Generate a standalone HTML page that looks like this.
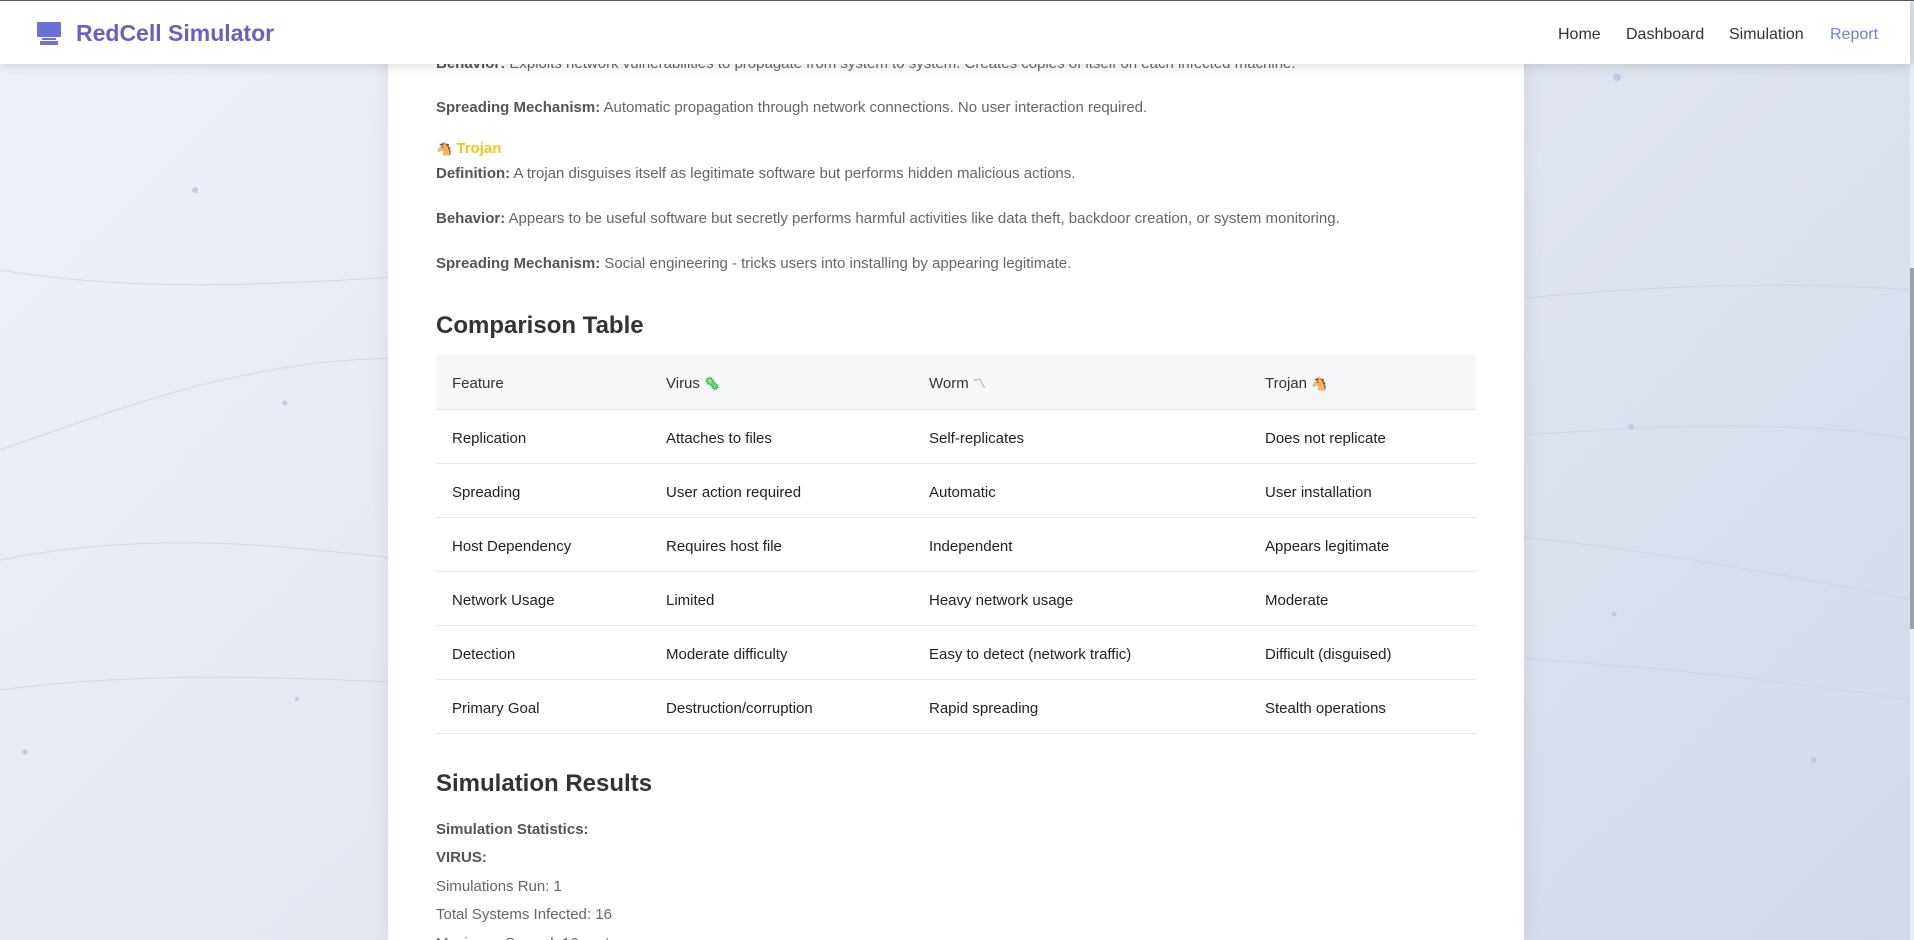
<!DOCTYPE html>
<html><head><meta charset="utf-8"><style>
*{margin:0;padding:0;box-sizing:border-box}
html,body{width:1914px;height:940px;overflow:hidden}
body{font-family:"Liberation Sans","Noto Sans CJK SC",sans-serif;background:linear-gradient(135deg,#eef1f8 0%,#e3e8f1 45%,#d2d9e8 100%);position:relative;color:#555}
.topline{position:absolute;left:0;top:0;width:1914px;height:1px;background:#555;z-index:20}
nav{position:absolute;left:0;top:1px;width:1910px;height:63px;background:#fff;box-shadow:0 2px 12px rgba(0,0,0,.12);z-index:10}
.logo{position:absolute;left:37px;top:21px}
.brand{position:absolute;left:76px;top:19px;font-size:23px;font-weight:bold;color:#6a5fc9}
.links{position:absolute;top:25px;font-size:16px;color:#333}
.links span{position:absolute;white-space:nowrap}
.card{position:absolute;left:388px;top:0;width:1136px;height:940px;background:#fff;box-shadow:0 0 20px rgba(0,0,0,.08)}
.t{position:absolute;left:436px;font-size:15px;white-space:nowrap;color:#666}
.t b{color:#555}
h2{position:absolute;left:436px;font-size:24px;color:#333;font-weight:bold}
table{position:absolute;left:436px;top:355px;width:1040px;border-collapse:collapse;font-size:15px;color:#222;table-layout:fixed}
td,th{text-align:left;font-weight:normal;height:54px;padding:4px 0 0 16px;border-bottom:1px solid #e6e8ec;vertical-align:middle}
th{background:#f6f7f9;color:#333}
th span{font-size:13px;line-height:1}
.sb{position:absolute;left:1910px;top:64px;width:4px;height:876px;background:#e9ecf2}
.sb i{position:absolute;left:0;top:204px;width:4px;height:361px;background:#9aa2ad}
</style></head><body>
<svg style="position:absolute;left:0;top:0" width="1914" height="940">
<g fill="none" stroke="#c9d1e2" stroke-width="1" opacity=".7">
<path d="M0 270 C300 320 600 220 900 300 S1500 260 1914 290"/>
<path d="M0 560 C300 500 500 620 900 560 S1500 520 1914 600"/>
<path d="M0 690 C300 650 600 720 900 680 S1500 640 1914 700"/>
<path d="M0 450 C200 380 400 300 700 420 S1600 380 1914 440"/>
</g>
<g fill="#c3cbe6"><circle cx="195" cy="190" r="3"/><circle cx="285" cy="403" r="2.5"/><circle cx="297" cy="699" r="2"/><circle cx="25" cy="752" r="2.5"/><circle cx="1617" cy="77" r="4"/><circle cx="1631" cy="427" r="3"/><circle cx="1614" cy="614" r="2.5"/><circle cx="1814" cy="760" r="3"/></g>
</svg>
<div class="card"></div>
<div class="t" style="top:55px"><b>Behavior:</b> Exploits network vulnerabilities to propagate from system to system. Creates copies of itself on each infected machine.</div>
<div class="t" style="top:99px"><b>Spreading Mechanism:</b> Automatic propagation through network connections. No user interaction required.</div>
<div class="t" style="top:140px"><span style="font-size:13px">🐴</span> <b style="color:#f5c518">Trojan</b></div>
<div class="t" style="top:165px"><b>Definition:</b> A trojan disguises itself as legitimate software but performs hidden malicious actions.</div>
<div class="t" style="top:210px"><b>Behavior:</b> Appears to be useful software but secretly performs harmful activities like data theft, backdoor creation, or system monitoring.</div>
<div class="t" style="top:255px"><b>Spreading Mechanism:</b> Social engineering - tricks users into installing by appearing legitimate.</div>
<h2 style="top:312px">Comparison Table</h2>
<table>
<colgroup><col style="width:214px"><col style="width:263px"><col style="width:336px"><col></colgroup>
<tr><th>Feature</th><th>Virus <span style="color:#3a9">🦠</span></th><th>Worm <span style="color:#c45">〽</span></th><th>Trojan <span>🐴</span></th></tr>
<tr><td>Replication</td><td>Attaches to files</td><td>Self-replicates</td><td>Does not replicate</td></tr>
<tr><td>Spreading</td><td>User action required</td><td>Automatic</td><td>User installation</td></tr>
<tr><td>Host Dependency</td><td>Requires host file</td><td>Independent</td><td>Appears legitimate</td></tr>
<tr><td>Network Usage</td><td>Limited</td><td>Heavy network usage</td><td>Moderate</td></tr>
<tr><td>Detection</td><td>Moderate difficulty</td><td>Easy to detect (network traffic)</td><td>Difficult (disguised)</td></tr>
<tr><td>Primary Goal</td><td>Destruction/corruption</td><td>Rapid spreading</td><td>Stealth operations</td></tr>
</table>
<h2 style="top:770px">Simulation Results</h2>
<div class="t" style="top:821px"><b>Simulation Statistics:</b></div>
<div class="t" style="top:849px"><b>VIRUS:</b></div>
<div class="t" style="top:878px">Simulations Run: 1</div>
<div class="t" style="top:906px">Total Systems Infected: 16</div>
<div class="t" style="top:935px">Maximum Spread: 16 systems</div>
<nav>
<svg class="logo" width="24" height="24" viewBox="0 0 24 24"><rect x="0" y="0" width="24" height="15" rx="1" fill="#6a72d8"/><rect x="5" y="16" width="14" height="2" fill="#6a72d8"/><rect x="3" y="19" width="18" height="4" fill="#6a72d8"/></svg>
<div class="brand">RedCell Simulator</div>
<div class="links"><span style="left:1558px">Home</span><span style="left:1626px">Dashboard</span><span style="left:1729px">Simulation</span><span style="left:1830px;color:#6b7fe6">Report</span></div>
</nav>
<div class="topline"></div>
<div class="sb"><i></i></div>
</body></html>
